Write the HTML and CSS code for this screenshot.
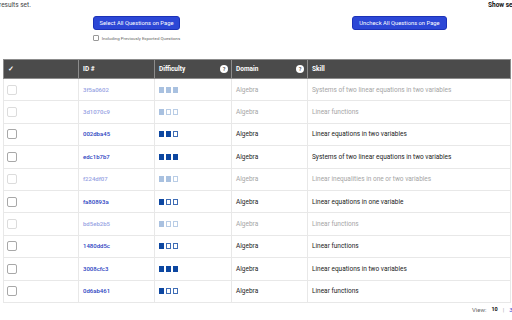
FILE: index.html
```html
<!DOCTYPE html>
<html lang="en">
<head>
    <meta charset="UTF-8">
    <meta name="viewport" content="width=device-width, initial-scale=1.0">
    <title>Question Bank Results</title>
    <link rel="stylesheet" href="styles.css">
</head>
<body>
    <div class="page">
        <div class="top-line">
            <span class="summary">results set.</span>
            <span class="show-selected">Show selected</span>
        </div>

        <div class="actions">
            <div class="action">
                <button class="btn">Select All Questions on Page</button>
                <label class="include">
                    <input type="checkbox" class="mini-check">
                    Including Previously Exported Questions
                </label>
            </div>
            <div class="action">
                <button class="btn">Uncheck All Questions on Page</button>
            </div>
        </div>

        <table class="results">
            <colgroup>
                <col class="c-check">
                <col class="c-id">
                <col class="c-diff">
                <col class="c-domain">
                <col>
            </colgroup>
            <thead>
                <tr>
                    <th>&#10003;</th>
                    <th>ID #</th>
                    <th><div class="th-help"><span>Difficulty</span> <span class="help">?</span></div></th>
                    <th><div class="th-help"><span>Domain</span> <span class="help">?</span></div></th>
                    <th>Skill</th>
                </tr>
            </thead>
            <tbody>
                <tr class="exported">
                    <td><span class="box"></span></td>
                    <td><a href="#" class="qid">3f5a0602</a></td>
                    <td><span class="level"><i class="on"></i><i class="on"></i><i class="on"></i></span></td>
                    <td>Algebra</td>
                    <td>Systems of two linear equations in two variables</td>
                </tr>
                <tr class="exported">
                    <td><span class="box"></span></td>
                    <td><a href="#" class="qid">3d1070c9</a></td>
                    <td><span class="level"><i class="on"></i><i></i><i></i></span></td>
                    <td>Algebra</td>
                    <td>Linear functions</td>
                </tr>
                <tr>
                    <td><span class="box"></span></td>
                    <td><a href="#" class="qid">002dba45</a></td>
                    <td><span class="level"><i class="on"></i><i class="on"></i><i></i></span></td>
                    <td>Algebra</td>
                    <td>Linear equations in two variables</td>
                </tr>
                <tr>
                    <td><span class="box"></span></td>
                    <td><a href="#" class="qid">edc1b7b7</a></td>
                    <td><span class="level"><i class="on"></i><i class="on"></i><i class="on"></i></span></td>
                    <td>Algebra</td>
                    <td>Systems of two linear equations in two variables</td>
                </tr>
                <tr class="exported">
                    <td><span class="box"></span></td>
                    <td><a href="#" class="qid">f224df07</a></td>
                    <td><span class="level"><i class="on"></i><i class="on"></i><i></i></span></td>
                    <td>Algebra</td>
                    <td>Linear inequalities in one or two variables</td>
                </tr>
                <tr>
                    <td><span class="box"></span></td>
                    <td><a href="#" class="qid">fa80893a</a></td>
                    <td><span class="level"><i class="on"></i><i></i><i></i></span></td>
                    <td>Algebra</td>
                    <td>Linear equations in one variable</td>
                </tr>
                <tr class="exported">
                    <td><span class="box"></span></td>
                    <td><a href="#" class="qid">bd5eb2b5</a></td>
                    <td><span class="level"><i class="on"></i><i></i><i></i></span></td>
                    <td>Algebra</td>
                    <td>Linear functions</td>
                </tr>
                <tr>
                    <td><span class="box"></span></td>
                    <td><a href="#" class="qid">1480dd5c</a></td>
                    <td><span class="level"><i class="on"></i><i></i><i></i></span></td>
                    <td>Algebra</td>
                    <td>Linear functions</td>
                </tr>
                <tr>
                    <td><span class="box"></span></td>
                    <td><a href="#" class="qid">3008cfc3</a></td>
                    <td><span class="level"><i class="on"></i><i class="on"></i><i class="on"></i></span></td>
                    <td>Algebra</td>
                    <td>Linear equations in two variables</td>
                </tr>
                <tr>
                    <td><span class="box"></span></td>
                    <td><a href="#" class="qid">0d6ab461</a></td>
                    <td><span class="level"><i class="on"></i><i></i><i></i></span></td>
                    <td>Algebra</td>
                    <td>Linear functions</td>
                </tr>
            </tbody>
        </table>

        <div class="pager">
            <span class="view">View:</span>
            <b>10</b>
            <span class="sep">|</span>
            <a href="#">30</a>
        </div>
    </div>
</body>
</html>
```

FILE: styles.css
```css
body {
    margin: 0;
    background-color: #fff;
    font-family: Roboto, "Liberation Sans", Arial, sans-serif;
    color: #222;
}

.page {
    width: 512px;
    height: 320px;
    overflow: hidden;
}

.top-line {
    display: flex;
    justify-content: space-between;
    height: 14px;
    padding-top: 1px;
    font-size: 6.5px;
    line-height: 9px;
}

.summary {
    color: #444;
    margin-left: -1px;
}

.show-selected {
    font-weight: 700;
    color: #111;
    width: 24px;
    white-space: nowrap;
}

.actions {
    display: grid;
    grid-template-columns: 1fr 1fr;
    width: 526px;
    margin-left: 5px;
    height: 43px;
    margin-top: 1px;
}

.action {
    display: flex;
    flex-direction: column;
    align-items: center;
}

.btn {
    height: 14px;
    padding: 0 6px;
    border: 1px solid #1c32b8;
    border-radius: 3px;
    background-color: #2c47d6;
    color: #fff;
    font-family: inherit;
    font-size: 5.8px;
    cursor: pointer;
}

.include {
    display: flex;
    align-items: center;
    gap: 3px;
    margin-top: 5px;
    font-size: 4.4px;
    color: #666;
}

.mini-check {
    appearance: none;
    width: 6px;
    height: 6px;
    margin: 0;
    border: 1px solid #999;
    border-radius: 1px;
}

.results {
    width: 508px;
    margin-left: 3px;
    border-collapse: collapse;
    table-layout: fixed;
    font-size: 6.5px;
}

.c-check { width: 75px; }
.c-id { width: 76px; }
.c-diff { width: 77px; }
.c-domain { width: 76px; }

.results th {
    height: 18px;
    padding: 0 3px 0 4px;
    background-color: #4b4b4b;
    border: 1px solid #8c8c8c;
    color: #fff;
    font-weight: 700;
    text-align: left;
}

.th-help {
    display: flex;
    align-items: center;
    justify-content: space-between;
    color: #fff;
}

.help {
    display: flex;
    align-items: center;
    justify-content: center;
    width: 8px;
    height: 8px;
    border-radius: 50%;
    background-color: #fff;
    color: #555;
    font-size: 5.5px;
}

.results td {
    height: 21.4px;
    padding: 0 3px 0 4px;
    border: 1px solid #e8e8e8;
    color: #222;
}

.results td:first-child {
    padding-left: 3px;
}

.box {
    display: block;
    width: 8px;
    height: 8px;
    border: 1px solid #a8a8a8;
    border-radius: 2px;
}

.qid {
    color: #2c3fbf;
    font-size: 6px;
    font-weight: 500;
    text-decoration: none;
}

.level {
    display: flex;
    gap: 2px;
}

.level i {
    width: 3px;
    height: 4px;
    border: 1px solid #3f6db5;
}

.level i.on {
    border-color: #0d47a1;
    background-color: #0d47a1;
}

.exported td {
    color: #a5a5a5;
}

.exported .box {
    border-color: #dcdcdc;
}

.exported .qid {
    color: #97a3e3;
}

.exported .level i {
    border-color: #b9cde6;
}

.exported .level i.on {
    border-color: #a9c1e0;
    background-color: #a9c1e0;
}

.pager {
    display: flex;
    justify-content: flex-end;
    align-items: center;
    gap: 5px;
    margin-right: -4px;
    margin-top: 3px;
    font-size: 6px;
}

.view {
    color: #666;
}

.pager b {
    font-size: 5.5px;
    color: #111;
}

.sep {
    color: #aaa;
}

.pager a {
    color: #3547d0;
    text-decoration: none;
}
```
